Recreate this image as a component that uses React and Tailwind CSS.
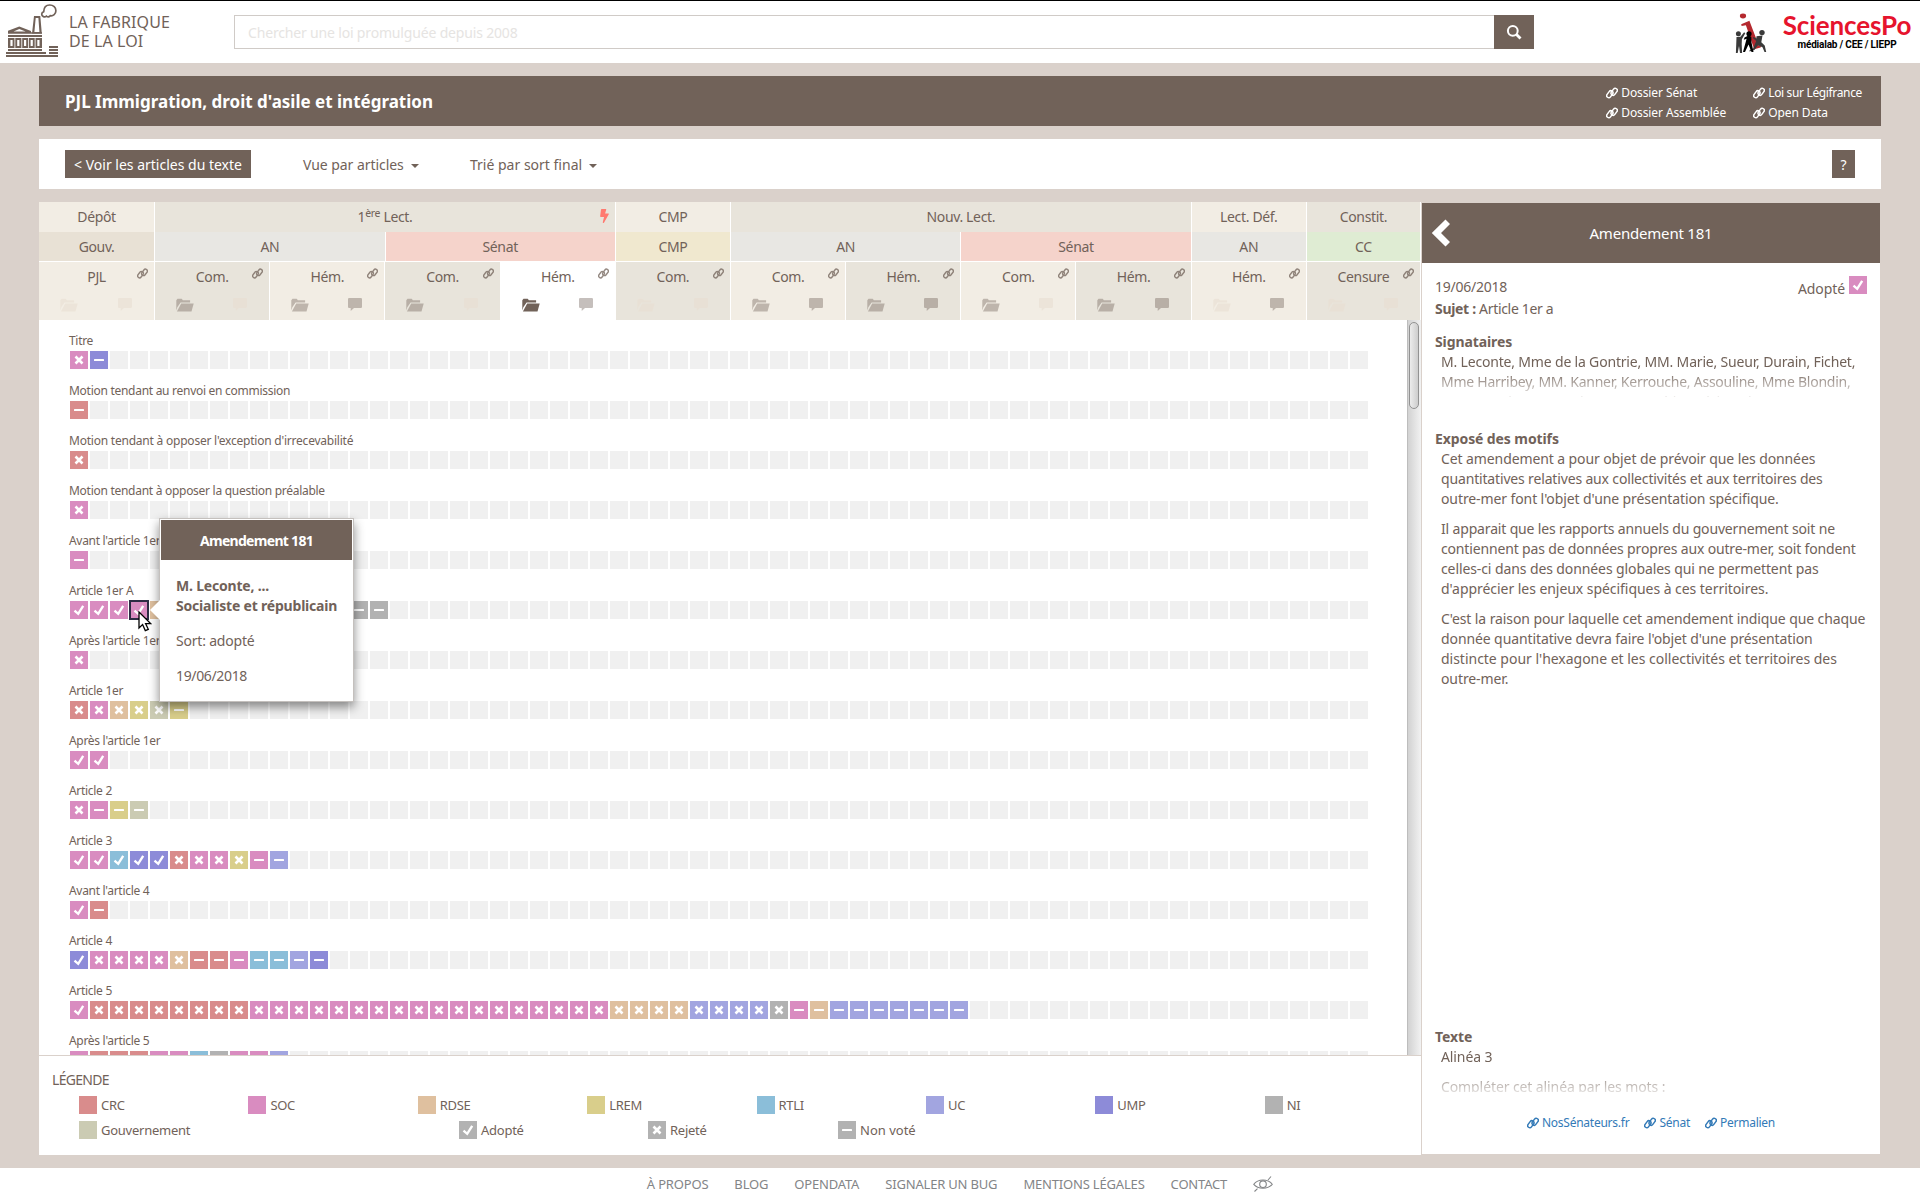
import { FaBolt } from "react-icons/fa";

const BG = {
  crc: "bg-[#d98c8c]",
  soc: "bg-[#d98cc0]",
  rdse: "bg-[#dfc09f]",
  lrem: "bg-[#d9ce8b]",
  rtli: "bg-[#8bbed9]",
  uc: "bg-[#a2a5e0]",
  ump: "bg-[#8d8bd8]",
  ni: "bg-[#b2b2b2]",
  gouv: "bg-[#cbcbb3]",
};

/* Each run: [group, outcome, count]; outcome: "v" adopted, "x" rejected, "-" not voted */
const ROWS = [
  ["Titre", [["soc", "x", 1], ["ump", "-", 1]]],
  ["Motion tendant au renvoi en commission", [["crc", "-", 1]]],
  ["Motion tendant à opposer l'exception d'irrecevabilité", [["crc", "x", 1]]],
  ["Motion tendant à opposer la question préalable", [["soc", "x", 1]]],
  ["Avant l'article 1er", [["soc", "-", 1]]],
  ["Article 1er A", [["soc", "v", 4], ["rdse", "", 1], ["soc", "x", 6], ["ni", "-", 5]]],
  ["Après l'article 1er", [["soc", "x", 1]]],
  ["Article 1er", [["crc", "x", 1], ["soc", "x", 1], ["rdse", "x", 1], ["lrem", "x", 1], ["gouv", "x", 1], ["lrem", "-", 1]]],
  ["Après l'article 1er", [["soc", "v", 2]]],
  ["Article 2", [["soc", "x", 1], ["soc", "-", 1], ["lrem", "-", 1], ["gouv", "-", 1]]],
  ["Article 3", [["soc", "v", 2], ["rtli", "v", 1], ["ump", "v", 2], ["crc", "x", 1], ["soc", "x", 2], ["lrem", "x", 1], ["soc", "-", 1], ["uc", "-", 1]]],
  ["Avant l'article 4", [["soc", "v", 1], ["crc", "-", 1]]],
  ["Article 4", [["ump", "v", 1], ["soc", "x", 4], ["rdse", "x", 1], ["crc", "-", 2], ["soc", "-", 1], ["rtli", "-", 2], ["uc", "-", 1], ["ump", "-", 1]]],
  ["Article 5", [["soc", "v", 1], ["crc", "x", 8], ["soc", "x", 18], ["rdse", "x", 4], ["uc", "x", 4], ["ni", "x", 1], ["soc", "-", 1], ["rdse", "-", 1], ["uc", "-", 7]]],
  ["Après l'article 5", [["soc", "x", 1], ["crc", "x", 3], ["soc", "x", 2], ["rtli", "x", 1], ["ni", "x", 1], ["soc", "-", 2], ["uc", "-", 1]]],
];
const CELLS = 65;

function Mark({ kind }) {
  if (kind === "x")
    return (
      <svg viewBox="0 0 18 18" className="size-[18px]" stroke="#fff" strokeWidth="2.6" fill="none">
        <path d="M5.5 5.500l7 7M12.500 5.500l-7 7" />
      </svg>
    );
  if (kind === "v")
    return (
      <svg viewBox="0 0 18 18" className="size-[18px]" stroke="#fff" strokeWidth="2.4" fill="none">
        <path d="M4.500 9.600l3.700 3.200 5-7.900" />
      </svg>
    );
  if (kind === "-")
    return (
      <svg viewBox="0 0 18 18" className="size-[18px]" fill="#fff">
        <rect x="4" y="8" width="10" height="2" rx=".5" />
      </svg>
    );
  return null;
}

function Square({ group, kind }) {
  return <span className={"block size-[18px] shrink-0 " + (BG[group] || "bg-[#f0f0f0]")}><Mark kind={kind} /></span>;
}

function ChainIcon({ className }) {
  return (
    <svg viewBox="0 0 12 12" className={className} fill="none" stroke="currentColor" strokeWidth="1.5">
      <g transform="rotate(-53 6 6)">
        <rect x="-.1" y="2.900" width="7.600" height="4.200" rx="2.100" />
        <rect x="4.500" y="4.900" width="7.600" height="4.200" rx="2.100" />
      </g>
    </svg>
  );
}

function Factory() {
  return (
    <svg viewBox="0 0 60 60" className="h-[60px] w-[60px]" fill="#716259">
      <path d="M43.400 16.600c-2.400-1-2.200-4.200.3-5 .2-4 2.600-6.600 6-6.600 3.600 0 6.300 2.600 6.200 5.800 0 3.200-2.700 5.400-5.700 4.900-1 1.200-2.700 1.300-3.800.4-.9.900-2 1.100-3 .5z" fill="none" stroke="#716259" strokeWidth="1.7" />
      <path d="M34 16h6.300l1.500 17.500h-9.800zM35.700 18l-1.300 14h5l-1-14z" fillRule="evenodd" />
      <path d="M8 33v-2.200L19.300 26.500 31 31v2zM13.500 31.500h12.200L19.300 29z" fillRule="evenodd" />
      <path d="M8 32.200h34v1.600H8zM8 35h34v2H8zM8 49h34v2H8zM6 52h40v2H6zM6 55h52v2H6zM49 46h9v2h-9zM49 49h9v2h-9zM49 52h9v2h-9z" />
      <path d="M8 38h34v10H8zM10.400 40v6h2.200v-6zM17.200 40v6h2.200v-6zM24 40v6h2.200v-6zM30.600 40v6h2.200v-6zM37.300 40v6h2.200v-6z" fillRule="evenodd" />
      <path d="M14.500 38h.8v10h-.8zM21.400 38h.8v10h-.8zM28 38h.8v10h-.8zM34.700 38h.8v10h-.8z" fill="#fff" />
    </svg>
  );
}

function Regards() {
  return (
    <svg viewBox="0 0 32 42" className="h-[42px] w-8">
      <ellipse cx="8" cy="4" rx="3.100" ry="2.400" fill="#b5292f" />
      <path d="M6.200 12.200l8.200-3.400 9.600 25.200 2.200-.2-.6 1.700-7.300 2 .5-1.500-7.900-22.800-4.300.8z" fill="#b5292f" />
      <g fill="#3a3a3a">
        <circle cx="3.400" cy="21.800" r="2.500" />
        <path d="M1.500 25l4-.2 3.600-4.600 1.200 1-3.400 6-.2 5 .4 8.800H5l-1-7-1.300 7H.9z" />
        <circle cx="27" cy="20.600" r="2.700" />
        <path d="M21.500 24.200l6-.7-1.200 6.800 3.400 3.200 1.500 6.500h-1.700l-2-4.700-4.700-2-3.400 4.700-5 1.500.3-1.600 3.500-1.500 3-7.300-3.400-3.200.8-1 2.700 1.500z" />
      </g>
      <g fill="#000">
        <circle cx="14" cy="21.800" r="2.600" />
        <path d="M9.500 25.500l4.500-2.200 2.300 1.600.2 5.500 2 9.600h-2l-3-7.500-3.500 7.500H8l2.600-9.500 1-3.800-2.800 1z" />
      </g>
    </svg>
  );
}

function FolderIcon({ className }) {
  return (
    <svg viewBox="0 0 18 14" className={"h-[14px] w-[18px] " + className} fill="currentColor">
      <path d="M.3 12.500V2.200L1.500.8h4.200l1.200 1.400h7.200v2.300H4.600L1.300 9.200z" />
      <path d="M5.200 5.400h12.500l-2.200 8.100H.9z" />
    </svg>
  );
}

function CommentIcon({ className }) {
  return (
    <svg viewBox="0 0 14 13" className={"h-[13px] w-[14px] " + className} fill="currentColor">
      <path d="M.8 0h12.400l.8.8v8.400l-.8.8H6L2.700 13v-3H.8L0 9.200V.8z" />
    </svg>
  );
}

const LIGHT = "bg-[#f2ede4]";
const DARK = "bg-[#e8e4db]";
const AN = "bg-[#e8e7e3]";
const SENAT = "bg-[#f5d3cb]";

const STAGES = [
  ["Dépôt", "col-span-1", LIGHT],
  ["1", "col-span-4", DARK],
  ["CMP", "col-span-1", LIGHT],
  ["Nouv. Lect.", "col-span-4", DARK],
  ["Lect. Déf.", "col-span-1", LIGHT],
  ["Constit.", "col-span-1", DARK],
];
const CHAMBERS = [
  ["Gouv.", "col-span-1", "bg-[#e8e1d5]"],
  ["AN", "col-span-2", AN],
  ["Sénat", "col-span-2", SENAT],
  ["CMP", "col-span-1", "bg-[#f0e8cf]"],
  ["AN", "col-span-2", AN],
  ["Sénat", "col-span-2", SENAT],
  ["AN", "col-span-1", AN],
  ["CC", "col-span-1", "bg-[#dfecd3]"],
];
const OFF = "text-[#e9dfd2] opacity-60";
const ON = "text-[#716259] opacity-40";
const FULL = "text-[#716259]";
const STEPS = [
  ["PJL", LIGHT, OFF, OFF],
  ["Com.", DARK, ON, OFF],
  ["Hém.", LIGHT, ON, ON],
  ["Com.", DARK, ON, OFF],
  ["Hém.", "bg-white", FULL, ON],
  ["Com.", DARK, OFF, OFF],
  ["Com.", LIGHT, ON, ON],
  ["Hém.", DARK, ON, ON],
  ["Com.", LIGHT, ON, OFF],
  ["Hém.", DARK, ON, ON],
  ["Hém.", LIGHT, OFF, ON],
  ["Censure", DARK, OFF, OFF],
];
const CELL = "relative border-l border-white text-center leading-[29px] first:border-l-0 last:border-r ";

function Timeline() {
  return (
    <div className="flex h-[118px] w-[1382px] shrink-0 flex-col gap-px bg-white tracking-[-0.35px]">
      <div className="grid h-[29px] grid-cols-12">
        {STAGES.map(([name, span, bg], i) => (
          <div key={i} className={CELL + span + " " + bg}>
            {name === "1" ? <>1<span className="relative -top-[5px] text-[10.5px]">ère</span> Lect.</> : name}
            {name === "1" && <FaBolt className="absolute top-[7px] right-[5px] h-[14px] w-[11px] text-[#ff7a70]" />}
          </div>
        ))}
      </div>
      <div className="grid h-[29px] grid-cols-12">
        {CHAMBERS.map(([name, span, bg], i) => (
          <div key={i} className={CELL + span + " " + bg}>{name}</div>
        ))}
      </div>
      <div className="grid h-[58px] grid-cols-12">
        {STEPS.map(([name, bg, folder, comment], i) => (
          <div key={i} className={CELL + bg}>
            {name}
            <ChainIcon className="absolute top-[6px] right-[6px] size-[11px] opacity-75" />
            <div className="flex justify-between pt-[7px] pr-[22px] pl-[21px]">
              <FolderIcon className={folder} />
              <CommentIcon className={comment} />
            </div>
          </div>
        ))}
      </div>
    </div>
  );
}

function Tooltip() {
  return (
    <div className="absolute -top-[82px] left-[30px] z-10 h-[184px] w-[195px] border border-[#c4c0bd] bg-white p-px tracking-[-0.2px] shadow-[0_5px_10px_rgba(0,0,0,0.45)]">
      <svg viewBox="0 0 10 20" className="absolute top-[81px] -left-[10px] h-5 w-[10px]">
        <path d="M10 0L0 10l10 10z" fill="#fff" />
      </svg>
      <div className="h-10 bg-[#716259] text-center font-bold leading-[41px] tracking-[-0.7px] text-white">Amendement 181</div>
      <div className="pt-4 pl-[15px] whitespace-nowrap">
        <p className="font-bold">M. Leconte, ...<br />Socialiste et républicain</p>
        <p className="mt-[15px]">Sort: adopté</p>
        <p className="mt-[15px] tracking-[-0.35px]">19/06/2018</p>
      </div>
    </div>
  );
}

function Row({ label, runs }) {
  const cells = runs.flatMap(([g, k, n]) => Array.from({ length: n }, () => [g, k]));
  while (cells.length < CELLS) cells.push(["", ""]);
  const selected = label === "Article 1er A" ? 3 : -1;
  return (
    <div className="h-[50px]">
      <div className={"h-5 pt-px text-xs leading-5 " + (label.length < 25 ? "tracking-[-0.3px]" : label.length > 50 ? "tracking-[-0.22px]" : "tracking-[-0.28px]")}>{label}</div>
      <div className="flex">
        {cells.map(([g, k], i) => (
          <div key={i} className={"relative size-5 p-px " + (i === selected ? "z-20" : "")}>
            <Square group={g} kind={k} />
            {i === selected && (
              <>
                <span className="absolute inset-0 border-2 border-[#2e2c44]" />
                <svg viewBox="0 0 14 21" className="absolute top-[11px] left-[9px] h-[21px] w-[14px]">
                  <path d="M1 1v16l3.600-3.400 2.700 6 3-1.300-2.700-5.700h5z" fill="#fff" stroke="#000" strokeWidth="1.300" />
                </svg>
              </>
            )}
          </div>
        ))}
      </div>
    </div>
  );
}

const LEGEND = [["crc", "CRC"], ["soc", "SOC"], ["rdse", "RDSE"], ["lrem", "LREM"], ["rtli", "RTLI"], ["uc", "UC"], ["ump", "UMP"], ["ni", "NI"]];

function LegendItem({ group, kind, text, className }) {
  return (
    <div className={"flex shrink-0 gap-1 " + className}>
      <Square group={group} kind={kind} />
      <span className="leading-[19px]">{text}</span>
    </div>
  );
}

function Legend() {
  return (
    <div className="h-[100px] shrink-0 border-t border-[#dad1cb] pt-[14px] pl-[13px]">
      <div className="tracking-[-0.7px]">LÉGENDE</div>
      <div className="mt-[6px] flex h-[18px] overflow-visible pl-[27px] text-[13px] tracking-[-0.3px]">
        {LEGEND.map(([g, t]) => <LegendItem key={g} group={g} text={t} className={g === "ni" ? "" : "w-[169.4px]"} />)}
      </div>
      <div className="mt-[7px] flex pl-[27px] text-[13px] tracking-[-0.25px]">
        <LegendItem group="gouv" text="Gouvernement" className="w-[380px]" />
        <LegendItem group="ni" kind="v" text="Adopté" className="w-[189px]" />
        <LegendItem group="ni" kind="x" text="Rejeté" className="w-[190px]" />
        <LegendItem group="ni" kind="-" text="Non voté" className="tracking-normal" />
      </div>
    </div>
  );
}

function IconLink({ children, className = "" }) {
  return (
    <a className={"flex items-center gap-[3px] " + className}>
      <ChainIcon className="size-3" />
      {children}
    </a>
  );
}

function Panel() {
  return (
    <aside className="flex w-[460px] shrink-0 flex-col border border-[#dad1cb] bg-white tracking-[-0.1px]">
      <div className="flex h-[60px] shrink-0 items-center bg-[#716259] pl-[9px] text-white">
        <svg viewBox="0 0 20 28" className="h-7 w-5" fill="#fff">
          <path d="M14.500.5L19 5l-9 9 9 9-4.500 4.500L.8 14z" />
        </svg>
        <div className="flex-1 pr-[29px] text-center text-[15px] tracking-[-0.2px]">Amendement 181</div>
      </div>
      <div className="flex flex-1 flex-col px-[13px] pt-[14px]">
        <div className="flex h-[22px] justify-between">
          <span className="tracking-[-0.25px]">19/06/2018</span>
          <span className="-mt-px flex gap-[4px]"><span className="pt-[3px]">Adopté</span><Square group="soc" kind="v" /></span>
        </div>
        <div className="tracking-[-0.32px]"><b>Sujet :</b> Article 1er a</div>
        <b className="mt-[13px]">Signataires</b>
        <p className="h-[45px] overflow-hidden pl-[6px] whitespace-nowrap tracking-[-0.18px] [mask-image:linear-gradient(to_bottom,#000_18px,transparent_49px)]">
          M. Leconte, Mme de la Gontrie, MM. Marie, Sueur, Durain, Fichet,<br />
          <span className="tracking-[-0.25px]">Mme Harribey, MM. Kanner, Kerrouche, Assouline, Mme Blondin,</span><br />
          MM. Botrel, Jacques Bigot, Mme Lubin, Sylvie Robert, Tourenne
        </p>
        <b className="mt-[32px]">Exposé des motifs</b>
        <div className="flex flex-col gap-[10px] pl-[6px] whitespace-nowrap">
          <p>Cet amendement a pour objet de prévoir que les données<br /><span className="tracking-[-0.16px]">quantitatives relatives aux collectivités et aux territoires des</span><br />outre-mer font l'objet d'une présentation spécifique.</p>
          <p><span className="tracking-[-0.16px]">Il apparait que les rapports annuels du gouvernement soit ne<br />contiennent pas de données propres aux outre-mer, soit fondent</span><br />celles-ci dans des données globales qui ne permettent pas<br /><span className="tracking-[-0.05px]">d'apprécier les enjeux spécifiques à ces territoires.</span></p>
          <p>C'est la raison pour laquelle cet amendement indique que chaque<br />donnée quantitative devra faire l'objet d'une présentation<br /><span className="tracking-[-0.02px]">distincte pour l'hexagone et les collectivités et territoires des</span><br />outre-mer.</p>
        </div>
        <b className="mt-auto">Texte</b>
        <div className="h-[45px] overflow-hidden pl-[6px] [mask-image:linear-gradient(to_bottom,#000_20px,transparent_52px)]">
          <p>Alinéa 3</p>
          <p className="mt-[10px]">Compléter cet alinéa par les mots :</p>
        </div>
        <div className="mt-[21px] flex justify-center gap-[15px] pb-[21px] text-xs leading-5 tracking-[-0.25px] text-[#337ab7]">
          <IconLink>NosSénateurs.fr</IconLink>
          <IconLink>Sénat</IconLink>
          <IconLink>Permalien</IconLink>
        </div>
      </div>
    </aside>
  );
}

function Caret() {
  return <span className="ml-[7px] inline-block border-x-4 border-t-4 border-x-transparent border-t-[#716259] align-middle" />;
}

export default function App() {
  return (
    <div className="flex h-[1200px] w-[1920px] flex-col overflow-hidden bg-[#dad1cb] font-['Noto_Sans',sans-serif] text-sm leading-5 text-[#716259]">
      <header className="flex h-[63px] shrink-0 border-t border-black bg-white">
        <div className="-mt-px"><Factory /></div>
        <div className="w-[174px] pt-[12px] pl-[9px] text-base leading-[19px] tracking-[0.1px]">LA FABRIQUE<br />DE LA LOI</div>
        <div className="mt-[14px] flex h-[34px] w-[1260px] border border-r-0 border-[#d0cbc7] pl-[13px] leading-[33px] tracking-[-0.17px] text-[#e6e4e2]">Chercher une loi promulguée depuis 2008</div>
        <div className="mt-[14px] flex h-[34px] w-10 items-center justify-center bg-[#716259]">
          <svg viewBox="0 0 16 16" className="size-4" fill="none" stroke="#fff">
            <circle cx="6.800" cy="6.800" r="4.900" strokeWidth="2" />
            <path d="M10.500 10.500l4 4" strokeWidth="2.800" />
          </svg>
        </div>
        <div className="mt-[11px] ml-[201px]"><Regards /></div>
        <div className="ml-[15px] w-[130px] pt-[7px] text-center">
          <div className="font-['Lato',sans-serif] text-[26px] leading-[34px] font-bold tracking-[-0.1px] text-[#e6142d]">SciencesPo</div>
          <div className="-mt-[5px] font-['Roboto',sans-serif] text-[10px] leading-[16px] font-bold tracking-[-0.2px] text-black">médialab / CEE / LIEPP</div>
        </div>
      </header>

      <main className="flex flex-1 flex-col gap-[13px] px-[39px] py-[13px]">
        <div className="flex h-[50px] shrink-0 items-center justify-between bg-[#716259] pr-[19px] pl-[26px] text-white">
          <h1 className="pt-[2px] text-[17px] font-bold">PJL Immigration, droit d'asile et intégration</h1>
          <div className="grid grid-cols-[147px_auto] pt-[4px] text-xs leading-5 tracking-[-0.1px]">
            <IconLink>Dossier Sénat</IconLink>
            <IconLink className="tracking-[-0.35px]">Loi sur Légifrance</IconLink>
            <IconLink>Dossier Assemblée</IconLink>
            <IconLink>Open Data</IconLink>
          </div>
        </div>

        <div className="flex h-[50px] shrink-0 items-center bg-white pr-[26px] pl-[26px]">
          <a className="h-7 w-[186px] bg-[#716259] text-center leading-[30px] text-white">&lt; Voir les articles du texte</a>
          <div className="ml-[52px] w-[167px] pt-px tracking-[-0.05px]">Vue par articles<Caret /></div>
          <div className="pt-px">Trié par sort final<Caret /></div>
          <a className="ml-auto h-7 w-[23px] bg-[#716259] text-center leading-[30px] text-white">?</a>
        </div>

        <div className="flex h-[953px] shrink-0">
          <section className="relative flex w-[1382px] flex-col bg-white">
            <Timeline />
            <div className="flex min-h-0 flex-1 overflow-hidden">
              <div className="relative flex-1 pt-[10px] pl-[30px]">
                {ROWS.map(([label, runs], i) => <Row key={i} label={label} runs={runs} />)}
                <div className="absolute top-[280px] left-[90px]"><Tooltip /></div>
              </div>
              <div className="w-[14px] border-l border-[#bdbdbd] bg-linear-to-r from-[#d2d2d2] to-[#f2f2f2] pt-[2px] pl-px">
                <div className="h-[87px] w-[10px] rounded-full border border-[#929292] bg-linear-to-r from-[#ececec] to-[#cdcdcd]" />
              </div>
            </div>
            <Legend />
          </section>
          <Panel />
        </div>
      </main>

      <footer className="flex h-8 shrink-0 items-center justify-center gap-[26px] bg-white text-[13px] tracking-[-0.18px] text-[#838587]">
        <a>À PROPOS</a>
        <a>BLOG</a>
        <a>OPENDATA</a>
        <a>SIGNALER UN BUG</a>
        <a>MENTIONS LÉGALES</a>
        <a>CONTACT</a>
        <svg viewBox="0 0 20 16" className="h-4 w-5" fill="none" stroke="#838587" strokeWidth="1.100">
          <path d="M.8 8.300C5 2.500 15 2.500 19.200 8.300 15 13.500 5 13.500.8 8.300zM1.500 15.500L4.500 12.600M15 4l3-3.500" />
          <circle cx="10" cy="8.200" r="3.300" />
        </svg>
      </footer>
    </div>
  );
}
